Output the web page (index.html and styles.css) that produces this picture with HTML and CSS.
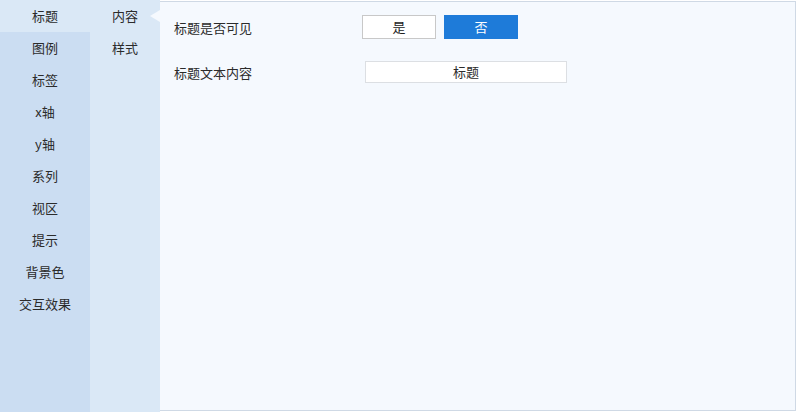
FILE: index.html
```html
<!DOCTYPE html>
<html lang="zh">
<head>
<meta charset="utf-8">
<link rel="stylesheet" href="styles.css">
</head>
<body>
<div class="app">
  <nav class="nav1">
    <div class="item active">标题</div>
    <div class="item">图例</div>
    <div class="item">标签</div>
    <div class="item">x轴</div>
    <div class="item">y轴</div>
    <div class="item">系列</div>
    <div class="item">视区</div>
    <div class="item">提示</div>
    <div class="item">背景色</div>
    <div class="item">交互效果</div>
  </nav>
  <nav class="nav2">
    <div class="item active">内容<span class="arrow"></span></div>
    <div class="item">样式</div>
  </nav>
  <main class="main">
    <div class="row row1">
      <div class="label">标题是否可见</div>
      <div class="btns">
        <div class="btn">是</div>
        <div class="btn on">否</div>
      </div>
    </div>
    <div class="row row2">
      <div class="label">标题文本内容</div>
      <div class="input">标题</div>
    </div>
  </main>
</div>
</body>
</html>
```
FILE: styles.css
```css
html, body {
  margin: 0;
  padding: 0;
  background: #ffffff;
}
body {
  font-family: "Noto Sans CJK SC", "Noto Sans", sans-serif;
  font-size: 13px;
  color: #2b2b2b;
}
.app {
  display: flex;
  width: 796px;
  height: 412px;
}
.nav1 {
  width: 90px;
  flex: none;
  background: #cbddf2;
  height: 412px;
}
.nav1 .item {
  height: 32px;
  line-height: 32px;
  text-align: center;
}
.nav1 .item.active {
  background: #dae8f6;
}
.nav2 {
  width: 70px;
  flex: none;
  background: #dae8f6;
  height: 412px;
}
.nav2 .item {
  height: 32px;
  line-height: 32px;
  text-align: left;
  padding-left: 22px;
  position: relative;
}
.arrow {
  position: absolute;
  right: 0;
  top: 10px;
  width: 0;
  height: 0;
  border-top: 6px solid transparent;
  border-bottom: 6px solid transparent;
  border-right: 10px solid #f5f9fe;
}
.main {
  flex: 1;
  margin-top: 1px;
  height: 408px;
  background: #f5f9fe;
  border-top: 1px solid #cfd9e5;
  border-right: 1px solid #cfd9e5;
  border-bottom: 1px solid #cfd9e5;
  padding-left: 14px;
}
.row {
  display: flex;
  align-items: center;
}
.row1 {
  margin-top: 13px;
  height: 24px;
}
.row2 {
  margin-top: 22px;
  height: 22px;
}
.label {
  width: 188px;
}
.row2 .label { width: 191px; }
.btns {
  display: flex;
  gap: 8px;
}
.btn {
  width: 72px;
  height: 22px;
  line-height: 22px;
  text-align: center;
  background: #ffffff;
  border: 1px solid #c8c8c8;
  color: #222222;
}
.btn.on {
  background: #1e7bd9;
  border-color: #1e7bd9;
  color: #ffffff;
}
.input {
  width: 200px;
  height: 20px;
  line-height: 20px;
  text-align: center;
  background: #ffffff;
  border: 1px solid #dcdfe3;
}
```
